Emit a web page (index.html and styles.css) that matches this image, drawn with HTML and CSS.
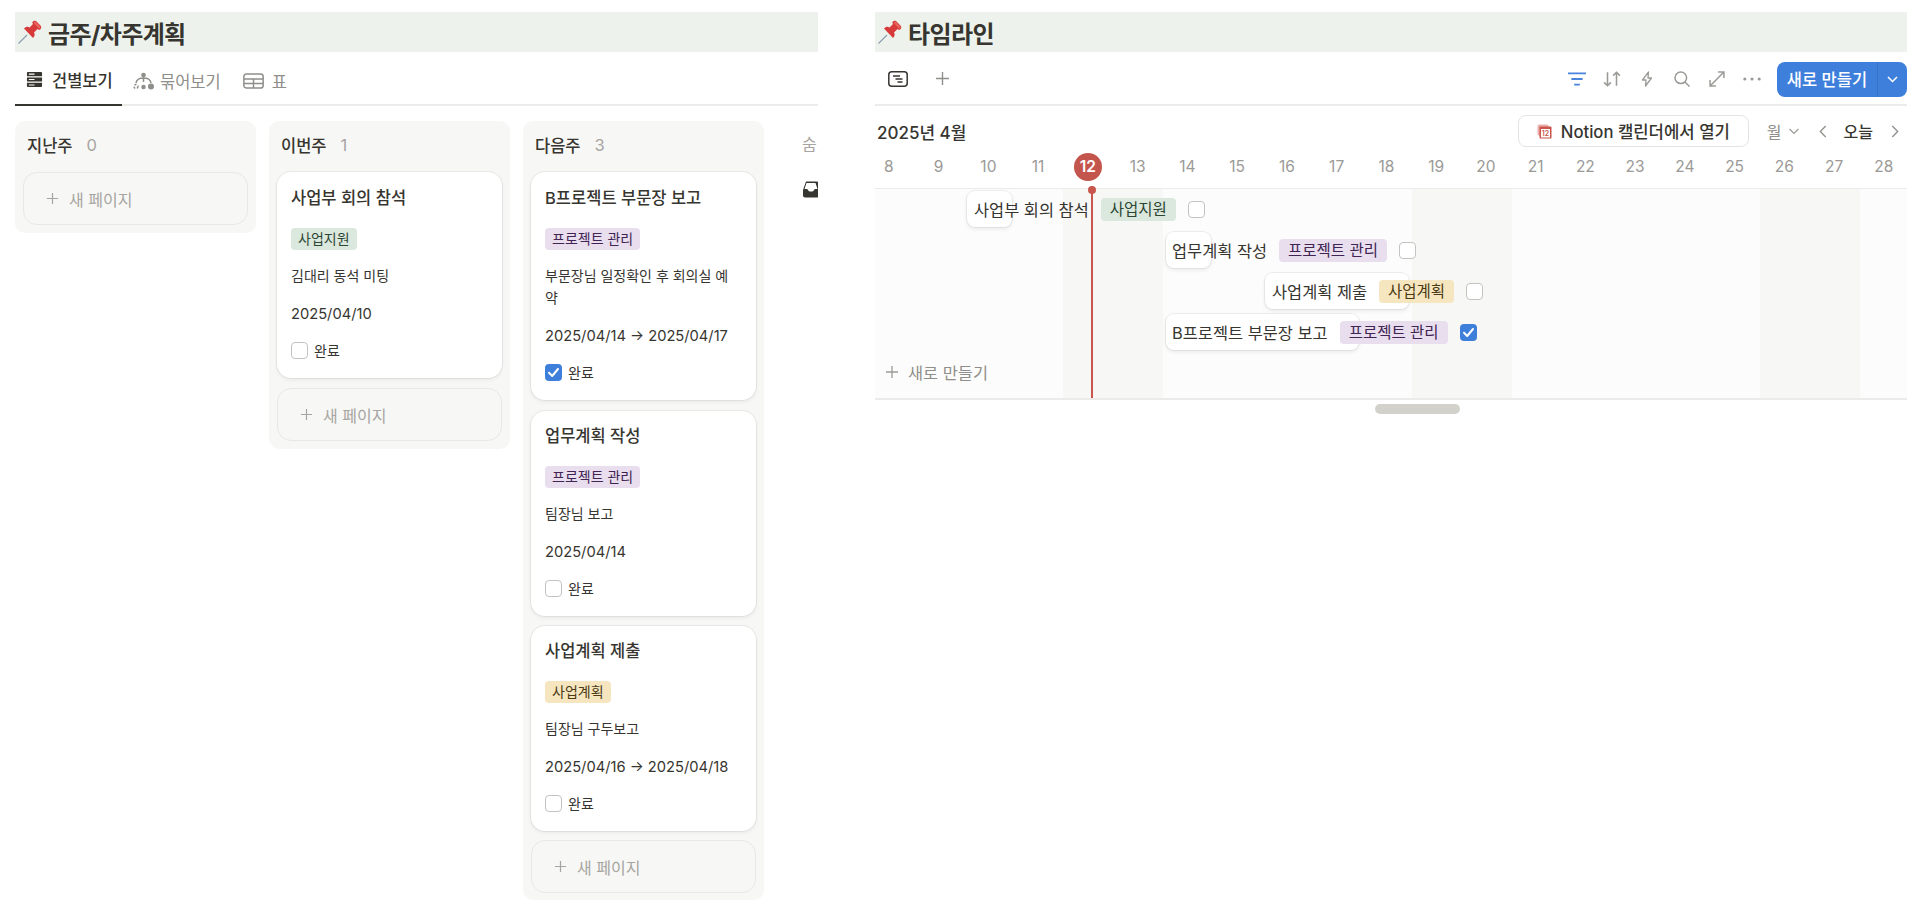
FILE: index.html
```html
<!DOCTYPE html>
<html lang="ko">
<head>
<meta charset="utf-8">
<title>금주/차주계획</title>
<link rel="stylesheet" href="styles.css">
</head>
<body>
<svg class="defs" width="0" height="0" aria-hidden="true">
  <symbol id="pin" viewBox="0 0 24 24">
    <path d="M.5 23.500 L9 15" stroke="#8c9bb0" stroke-width="1.100" fill="none"/>
    <path d="M6 8.500 C7.800 6.500 10 6.500 11.500 7.500 L15 4 L14.200 2.600 C15 .6 17 .3 18 1 L23 6 C23.700 7.500 23 9.600 21 10 L19.600 9 L16 12.500 C17 14 17 16 15 18 Z" fill="#d73a3a"/>
    <path d="M17.500 1.600 L22.400 6.500 C22.800 7.400 22.300 8.500 21.400 8.800 L16 3.400 C16 2.400 16.600 1.800 17.500 1.600 Z" fill="#e8635c"/>
  </symbol>
  <symbol id="plus" viewBox="0 0 14 14">
    <path d="M7 1v12M1 7h12" stroke="currentColor" stroke-width="1.300" fill="none"/>
  </symbol>
  <symbol id="check" viewBox="0 0 17 17">
    <path d="M4 8.800 L7.200 12 L13 5" stroke="#fff" stroke-width="2" fill="none" stroke-linecap="round" stroke-linejoin="round"/>
  </symbol>
</svg>

<main class="page">
  <section class="panel panel-board">
    <h1 class="band"><svg class="pin"><use href="#pin"/></svg><span>금주/차주계획</span></h1>
    <nav class="tabs">
      <div class="tab tab-active">
        <svg class="tab-icon" viewBox="0 0 18 17"><path fill="#37352f" d="M1 1.500a1 1 0 0 1 1-1h14a1 1 0 0 1 1 1V5H1zM1 6.300h16v4.400H1zM1 12h16v3.500a1 1 0 0 1-1 1H2a1 1 0 0 1-1-1z"/><path stroke="#fff" stroke-width="1.200" d="M3 8.500h6M3 14.300h6M3 2.800h6"/></svg>
        <span>건별보기</span>
      </div>
      <div class="tab tab-group">
        <svg class="tab-icon tab-icon-wide" viewBox="0 0 21 18" fill="none" stroke="#8f8e8a" stroke-width="1.500"><circle cx="10.500" cy="3" r="1.600" fill="#8f8e8a"/><path d="M10.500 3v7M3 11c.5-3.500 3.500-5 7.500-5s7 1.500 7.500 5"/><circle cx="3" cy="14.500" r="2" stroke-dasharray="2 1.500"/><circle cx="10.500" cy="15" r="1.500" fill="#8f8e8a"/><circle cx="18" cy="14.500" r="2.300" fill="#8f8e8a"/></svg>
        <span>묶어보기</span>
      </div>
      <div class="tab tab-table">
        <svg class="tab-icon tab-icon-wide" viewBox="0 0 20 15" fill="none" stroke="#8f8e8a" stroke-width="1.400"><rect x=".8" y=".8" width="18.400" height="13.400" rx="2.500"/><path d="M.8 5.500h18.400M.8 9.800h18.400M10 5.500v8.700"/></svg>
        <span>표</span>
      </div>
    </nav>
    <div class="board">
      <div class="column column-short">
        <header class="col-head"><span class="col-name">지난주</span><span class="col-count">0</span></header>
        <div class="new-page"><svg class="plus"><use href="#plus"/></svg><span>새 페이지</span></div>
      </div>
      <div class="column column-short">
        <header class="col-head"><span class="col-name">이번주</span><span class="col-count">1</span></header>
        <article class="card card-mid">
          <h2 class="card-title">사업부 회의 참석</h2>
          <span class="tag tag-green">사업지원</span>
          <p class="card-line">김대리 동석 미팅</p>
          <p class="card-line card-date">2025/04/10</p>
          <label class="done"><span class="box"></span>완료</label>
        </article>
        <div class="new-page"><svg class="plus"><use href="#plus"/></svg><span>새 페이지</span></div>
      </div>
      <div class="column">
        <header class="col-head"><span class="col-name">다음주</span><span class="col-count">3</span></header>
        <article class="card card-tall">
          <h2 class="card-title">B프로젝트 부문장 보고</h2>
          <span class="tag tag-purple">프로젝트 관리</span>
          <p class="card-line">부문장님 일정확인 후 회의실 예<br>약</p>
          <p class="card-line card-date">2025/04/14 → 2025/04/17</p>
          <label class="done"><span class="box box-on"><svg class="tick"><use href="#check"/></svg></span>완료</label>
        </article>
        <article class="card card-tight">
          <h2 class="card-title">업무계획 작성</h2>
          <span class="tag tag-purple">프로젝트 관리</span>
          <p class="card-line">팀장님 보고</p>
          <p class="card-line card-date">2025/04/14</p>
          <label class="done"><span class="box"></span>완료</label>
        </article>
        <article class="card card-tight card-last">
          <h2 class="card-title">사업계획 제출</h2>
          <span class="tag tag-yellow">사업계획</span>
          <p class="card-line">팀장님 구두보고</p>
          <p class="card-line card-date">2025/04/16 → 2025/04/18</p>
          <label class="done"><span class="box"></span>완료</label>
        </article>
        <div class="new-page"><svg class="plus"><use href="#plus"/></svg><span>새 페이지</span></div>
      </div>
      <div class="hidden-col">
        <span class="hidden-name">숨</span>
        <svg class="inbox" viewBox="0 0 18 17"><path fill="#37352f" d="M4 .5h10.500A2.500 2.500 0 0 1 17 3v11.500a2 2 0 0 1-2 2H3a2 2 0 0 1-2-2V9z"/><path fill="#fff" d="M4.500 2h9l2 6h-2.800c-.5 1.600-2 2.600-3.700 2.600S5.800 9.600 5.300 8H2.500z"/></svg>
      </div>
    </div>
  </section>

  <section class="panel panel-timeline">
    <h1 class="band"><svg class="pin"><use href="#pin"/></svg><span>타임라인</span></h1>
    <div class="toolbar">
      <svg class="view-icon" viewBox="0 0 20 16" fill="none" stroke="#37352f" stroke-width="1.500"><rect x=".8" y=".8" width="18.400" height="14.400" rx="3"/><path d="M5 5h7M7.500 8h7M9.500 11h5"/></svg>
      <svg class="add-view"><use href="#plus"/></svg>
      <div class="tools">
        <svg class="tool" viewBox="0 0 16 12" fill="none" stroke="#4a83dc" stroke-width="1.600"><path d="M0 1h16M3 6h10M5.500 11h5"/></svg>
        <svg class="tool" viewBox="0 0 16 14" fill="none" stroke="#9b9a97" stroke-width="1.400"><path d="M4 1v12M1 10l3 3 3-3M12 13V1M9 4l3-3 3 3"/></svg>
        <svg class="tool" viewBox="0 0 11 16" fill="none" stroke="#9b9a97" stroke-width="1.300" stroke-linejoin="round"><path d="M7 .8 1 9h3.500L4 15l6-8H6.500z"/></svg>
        <svg class="tool" viewBox="0 0 16 16" fill="none" stroke="#9b9a97" stroke-width="1.500"><circle cx="6.800" cy="6.800" r="5.800"/><path d="M11 11l4.500 4.500"/></svg>
        <svg class="tool" viewBox="0 0 15 15" fill="none" stroke="#9b9a97" stroke-width="1.400"><path d="M1 14 14 1M8.500 1H14v5.500M1 8.500V14h5.500"/></svg>
        <svg class="tool" viewBox="0 0 15 3" fill="#9b9a97"><circle cx="1.500" cy="1.500" r="1.300"/><circle cx="7.500" cy="1.500" r="1.300"/><circle cx="13.500" cy="1.500" r="1.300"/></svg>
      </div>
      <div class="create">
        <span class="create-main">새로 만들기</span>
        <span class="create-more"><svg class="chev-white" viewBox="0 0 11 7" fill="none" stroke="#fff" stroke-width="1.500"><path d="M1 1l4.500 4.500L10 1"/></svg></span>
      </div>
    </div>
    <div class="cal-head">
      <span class="month">2025년 4월</span>
      <div class="cal-actions">
        <div class="open-cal">
          <svg class="cal-icon" viewBox="0 0 15 15"><rect x=".5" y=".5" width="11" height="11" rx="1.500" fill="#eab0aa"/><rect x="2.500" y="2.500" width="12" height="12" rx="1" fill="#c9554d"/><rect x="4" y="5" width="9" height="8.500" fill="#fff"/><text x="8.500" y="12.300" class="cal-num">12</text></svg>
          <span>Notion 캘린더에서 열기</span>
        </div>
        <span class="unit">월</span>
        <svg class="chev chev-down" viewBox="0 0 9 6" fill="none" stroke="#9b9a97" stroke-width="1.100"><path d="M.5.8l4 4 4-4"/></svg>
        <svg class="chev chev-prev" viewBox="0 0 7 12" fill="none" stroke="#8f8e8a" stroke-width="1.200"><path d="M6 1 1 6l5 5"/></svg>
        <span class="today-btn">오늘</span>
        <svg class="chev chev-next" viewBox="0 0 7 12" fill="none" stroke="#8f8e8a" stroke-width="1.200"><path d="m1 1 5 5-5 5"/></svg>
      </div>
    </div>
    <div class="days">
      <span>8</span><span>9</span><span>10</span><span>11</span><span class="day-today"><b>12</b></span><span>13</span><span>14</span><span>15</span><span>16</span><span>17</span><span>18</span><span>19</span><span>20</span><span>21</span><span>22</span><span>23</span><span>24</span><span>25</span><span>26</span><span>27</span><span>28</span>
    </div>
    <div class="grid">
      <div class="weekend weekend-a"></div>
      <div class="weekend weekend-b"></div>
      <div class="weekend weekend-c"></div>
      <div class="today-line"></div>

      <div class="row row-1">
        <div class="bar bar-1"></div>
        <span class="bar-title">사업부 회의 참석</span>
        <span class="tag tag-green bar-tag">사업지원</span>
        <span class="box"></span>
      </div>
      <div class="row row-2">
        <div class="bar bar-2"></div>
        <span class="bar-title">업무계획 작성</span>
        <span class="tag tag-purple bar-tag">프로젝트 관리</span>
        <span class="box"></span>
      </div>
      <div class="row row-3">
        <div class="bar bar-3"></div>
        <span class="bar-title">사업계획 제출</span>
        <span class="tag tag-yellow bar-tag">사업계획</span>
        <span class="box"></span>
      </div>
      <div class="row row-4">
        <div class="bar bar-4"></div>
        <span class="bar-title">B프로젝트 부문장 보고</span>
        <span class="tag tag-purple bar-tag">프로젝트 관리</span>
        <span class="box box-on"><svg class="tick"><use href="#check"/></svg></span>
      </div>
      <div class="grid-new"><svg class="grid-plus"><use href="#plus"/></svg><span>새로 만들기</span></div>
    </div>
    <div class="scroll"><div class="thumb"></div></div>
  </section>
</main>
</body>
</html>
```

FILE: styles.css
```css
* { box-sizing: border-box; }
html, body { margin: 0; padding: 0; background: #fff; }
body {
  width: 1920px;
  height: 907px;
  overflow: hidden;
  color: #37352f;
  font-family: Inter, "Noto Sans CJK KR", "Noto Sans", sans-serif;
}
.defs { position: absolute; }
.page { display: flex; padding: 12px 13px 0 15px; gap: 57px; height: 907px; }
.panel { overflow: hidden; flex: none; }
.panel-board { width: 803px; }
.panel-timeline { width: 1032px; }

.band {
  display: flex;
  align-items: center;
  height: 40px;
  margin: 0;
  padding-left: 3px;
  background: #edf3ec;
  font-size: 24px;
  font-weight: 700;
  letter-spacing: -0.6px;
}
.pin { width: 24px; height: 24px; margin-right: 6px; flex: none; }

.tabs {
  display: flex;
  height: 54px;
  border-bottom: 2px solid #ebebea;
  font-size: 16.500px;
  color: #8f8e8a;
}
.tab {
  display: flex;
  align-items: center;
  gap: 9px;
  height: 54px;
  padding: 3px 8px 0 11px;
  font-weight: 400;
}
.tab-active { color: #37352f; width: 107px; border-bottom: 2px solid #37352f; font-weight: 500; padding-right: 0; }
.tab-group { gap: 6px; }
.tab-table { gap: 8px; margin-left: 3px; }
.tab-icon { width: 17px; height: 17px; flex: none; }
.tab-icon-wide { width: 21px; height: 18px; }

.board { display: flex; align-items: flex-start; gap: 13px; padding-top: 15px; }
.column {
  width: 241px;
  height: 779px;
  flex: none;
  padding: 0 8px;
  background: #f7f7f5;
  border-radius: 10px;
}
.column-short { height: auto; padding-bottom: 8px; }
.col-head { display: flex; align-items: center; height: 51px; padding: 0 0 3px 4px; font-size: 16.500px; font-weight: 500; }
.col-count { margin-left: 14px; color: #a6a5a1; font-weight: 400; }

.new-page {
  display: flex;
  align-items: center;
  height: 53px;
  padding-left: 22px;
  border: 1.500px solid #e8e8e5;
  border-radius: 14px;
  color: #a6a5a1;
  font-size: 16px;
}
.plus { width: 13px; height: 13px; margin-right: 10px; color: #a6a5a1; }

.card {
  display: flex;
  flex-direction: column;
  align-items: flex-start;
  margin-bottom: 10px;
  padding: 15px 14px 0;
  height: 205px;
  background: #fff;
  border-radius: 14px;
  box-shadow: 0 0 0 1px rgba(15, 15, 15, .06), 0 2px 4px rgba(15, 15, 15, .06);
}
.card-mid { height: 206px; }
.card-tall { height: 228px; margin-bottom: 11px; }
.card-tight { padding-top: 14px; }
.card-last { margin-bottom: 9px; }
.card-title { margin: 0 0 19px; font-size: 16.500px; line-height: 22px; font-weight: 500; }
.card-line { margin: 15px 0 0; font-size: 14px; line-height: 22px; white-space: nowrap; }
.card-line + .card-line { margin-top: 16px; }
.card-date { font-size: 14.700px; }
.done { display: flex; align-items: center; gap: 6px; margin-top: 15px; font-size: 14px; }

.tag {
  display: inline-block;
  height: 22px;
  padding: 0 7px;
  border-radius: 4px;
  font-size: 14px;
  line-height: 22px;
  white-space: nowrap;
}
.tag-green { background: #dbe8dd; color: #2c4634; }
.tag-purple { background: #e8deee; color: #412454; }
.tag-yellow { background: #f6e6bf; color: #4b3a14; }

.box {
  display: block;
  width: 17px;
  height: 17px;
  flex: none;
  background: #fff;
  border: 1.500px solid #c4c3c0;
  border-radius: 4px;
}
.box-on { background: #3f7fdc; border: 0; }
.tick { display: block; width: 17px; height: 17px; }

.hidden-col { width: 16px; margin-left: 25px; overflow: hidden; flex: none; white-space: nowrap; }
.hidden-name { display: block; height: 51px; line-height: 47px; font-size: 16px; color: #a6a5a1; }
.inbox { display: block; width: 18px; height: 17px; margin-top: 9px; }

.toolbar { display: flex; align-items: center; height: 54px; padding: 2px 0 0 13px; border-bottom: 2px solid #ebebea; }
.view-icon { width: 20px; height: 16px; }
.add-view { width: 15px; height: 15px; margin: -2px 0 0 27px; color: #8f8e8a; }
.tools { display: flex; align-items: center; margin-left: auto; gap: 17px; margin-right: 16px; }
.tool { height: 16px; width: 18px; }
.create {
  display: flex;
  align-items: center;
  width: 130px;
  height: 35px;
  background: #3f7fdc;
  border-radius: 8px;
  color: #fff;
  font-size: 16.500px;
  font-weight: 500;
}
.create-main { width: 100px; text-align: center; }
.create-more { display: flex; align-items: center; justify-content: center; width: 30px; height: 35px; border-left: 1px solid #3871c6; }
.chev-white { width: 11px; height: 7px; }

.cal-head { display: flex; align-items: center; justify-content: space-between; height: 39px; padding: 11px 0 0 2px; }
.month { font-size: 17px; font-weight: 500; }
.cal-actions { display: flex; align-items: center; }
.open-cal {
  display: flex;
  align-items: center;
  justify-content: center;
  gap: 9px;
  width: 231px;
  height: 32px;
  border: 1.500px solid #e4e4e2;
  border-radius: 8px;
  font-size: 16.700px;
  font-weight: 500;
}
.cal-icon { width: 15px; height: 15px; }
.cal-num { font-size: 7px; fill: #c9554d; text-anchor: middle; font-weight: 600; }
.unit { margin-left: 18px; font-size: 16px; color: #8f8e8a; }
.chev { flex: none; }
.chev-down { width: 10px; height: 7px; margin-left: 7px; }
.chev-prev { width: 8px; height: 13px; margin-left: 20px; }
.today-btn { margin-left: 17px; font-size: 16px; font-weight: 500; }
.chev-next { width: 8px; height: 13px; margin: 0 8px 0 18px; }

.days {
  display: flex;
  height: 43px;
  margin-left: -11px;
  color: #9b9a97;
  font-size: 15.500px;
  align-items: center;
}
.days span { width: 49.750px; flex: none; text-align: center; }
.days .day-today b {
  display: block;
  width: 28px;
  height: 28px;
  margin: 0 auto;
  border-radius: 50%;
  background: #c4554d;
  color: #fff;
  font-weight: 600;
  line-height: 28px;
}

.grid {
  position: relative;
  height: 212px;
  background: #fcfcfc;
  border-top: 1px solid #ebebea;
  border-bottom: 2px solid #ebebea;
  padding-top: 2px;
}
.weekend { position: absolute; top: 0; bottom: 0; width: 100px; background: #f7f7f6; }
.weekend-a { left: 188px; }
.weekend-b { left: 537px; }
.weekend-c { left: 885px; }
.today-line { position: absolute; top: -3px; bottom: 0; left: 216px; width: 2px; background: #c9564e; }
.today-line::before {
  content: "";
  position: absolute;
  top: 0;
  left: -3px;
  width: 8px;
  height: 8px;
  border-radius: 50%;
  background: #c9564e;
}

.row { position: relative; display: flex; align-items: center; height: 36px; margin-bottom: 5px; font-size: 16.400px; }
.bar {
  position: absolute;
  top: 0;
  bottom: 0;
  left: 0;
  background: #fff;
  border-radius: 8px;
  box-shadow: 0 0 0 1px rgba(15, 15, 15, .06), 0 2px 4px rgba(15, 15, 15, .08);
}
.bar-1 { width: 45px; }
.bar-2 { width: 45px; }
.bar-3 { width: 144px; }
.bar-4 { width: 193px; }
.row > :not(.bar) { position: relative; }
.row-1 { margin-left: 92px; padding-left: 7px; }
.row-2 { margin-left: 291px; padding-left: 6px; }
.row-3 { margin-left: 390px; padding-left: 7px; }
.row-4 { margin-left: 291px; padding-left: 6px; }
.bar-title { font-weight: 400; white-space: nowrap; }
.bar-tag { height: 23px; margin-left: 12px; padding: 0 9px; font-size: 15.500px; line-height: 23px; }
.row .box { margin-left: 12px; }

.grid-new { position: relative; display: flex; align-items: center; height: 20px; margin-top: 12px; padding-left: 10px; color: #8f8e8a; font-size: 16.400px; }
.grid-plus { width: 14px; height: 14px; margin-right: 9px; color: #9b9a97; }

.scroll { height: 16px; padding: 4px 0 0 500px; }
.thumb { width: 85px; height: 10px; border-radius: 5px; background: #d2d1cc; }
```
